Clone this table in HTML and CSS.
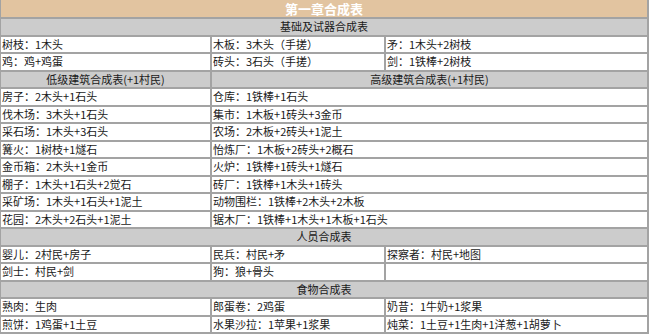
FILE: index.html
```html
<!DOCTYPE html>
<html lang="zh-CN">
<head>
<meta charset="utf-8">
<title>第一章合成表</title>
<link rel="stylesheet" href="styles.css">
</head>
<body>
<table class="recipes">
  <colgroup>
    <col class="c1"><col class="c2"><col class="c3">
  </colgroup>
  <tbody>
    <tr class="title-row"><th colspan="3" class="title">第一章合成表</th></tr>
    <tr><th colspan="3" class="section">基础及试器合成表</th></tr>
    <tr><td>树枝：1木头</td><td>木板：3木头（手搓）</td><td>矛：1木头+2树枝</td></tr>
    <tr><td>鸡：鸡+鸡蛋</td><td>砖头：3石头（手搓）</td><td>剑：1铁棒+2树枝</td></tr>
    <tr><th class="section">低级建筑合成表(+1村民)</th><th colspan="2" class="section">高级建筑合成表(+1村民)</th></tr>
    <tr><td>房子：2木头+1石头</td><td colspan="2">仓库：1铁棒+1石头</td></tr>
    <tr><td>伐木场：3木头+1石头</td><td colspan="2">集市：1木板+1砖头+3金币</td></tr>
    <tr><td>采石场：1木头+3石头</td><td colspan="2">农场：2木板+2砖头+1泥土</td></tr>
    <tr><td>篝火：1树枝+1燧石</td><td colspan="2">怡炼厂：1木板+2砖头+2概石</td></tr>
    <tr><td>金币箱：2木头+1金币</td><td colspan="2">火炉：1铁棒+1砖头+1燧石</td></tr>
    <tr><td>棚子：1木头+1石头+2觉石</td><td colspan="2">砖厂：1铁棒+1木头+1砖头</td></tr>
    <tr><td>采矿场：1木头+1石头+1泥土</td><td colspan="2">动物围栏：1铁棒+2木头+2木板</td></tr>
    <tr><td>花园：2木头+2石头+1泥土</td><td colspan="2">锯木厂：1铁棒+1木头+1木板+1石头</td></tr>
    <tr><th colspan="3" class="section">人员合成表</th></tr>
    <tr><td>婴儿：2村民+房子</td><td>民兵：村民+矛</td><td>探察者：村民+地图</td></tr>
    <tr><td>剑士：村民+剑</td><td>狗：狼+骨头</td><td></td></tr>
    <tr><th colspan="3" class="section">食物合成表</th></tr>
    <tr><td>熟肉：生肉</td><td>郎蛋卷：2鸡蛋</td><td>奶昔：1牛奶+1浆果</td></tr>
    <tr><td>煎饼：1鸡蛋+1土豆</td><td>水果沙拉：1苹果+1浆果</td><td>炖菜：1土豆+1生肉+1洋葱+1胡萝卜</td></tr>
  </tbody>
</table>
</body>
</html>
```

FILE: styles.css
```css
html, body {
  margin: 0;
  padding: 0;
  background: #ffffff;
}

body {
  font-family: "Noto Sans CJK SC", "Microsoft YaHei", sans-serif;
  font-size: 11px;
  color: #1a1a1a;
  overflow: hidden;
}

.recipes {
  table-layout: fixed;
  width: 650px;
  margin: -2px 0 0 -1px;
  border-collapse: separate;
  border-spacing: 2px;
  background: #a3a3a3;
}

.c1 { width: 209px; }
.c2 { width: 172px; }
.c3 { width: 261px; }

.recipes td,
.recipes th {
  height: 15.5px;
  padding: 0 1px;
  line-height: 15px;
  white-space: nowrap;
  overflow: hidden;
  vertical-align: middle;
}

.recipes td {
  background: #ffffff;
  text-align: left;
  font-weight: normal;
}

.recipes th.section {
  background: #cccccc;
  text-align: center;
  font-weight: normal;
  color: #1a1a1a;
}

.recipes th.title {
  height: 17px;
  background: #e2c4a0;
  color: #ffffff;
  font-size: 13px;
  font-weight: bold;
  text-align: center;
  line-height: 17px;
}
```
